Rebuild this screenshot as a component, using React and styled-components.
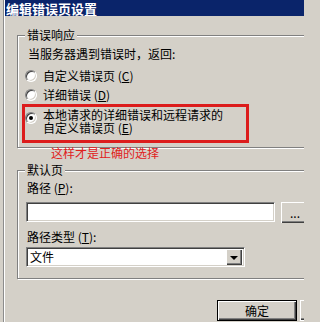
import React from 'react';
import styled, { createGlobalStyle } from 'styled-components';

const GlobalStyle = createGlobalStyle`
  * { box-sizing: border-box; }
  html, body {
    margin: 0;
    width: 304px;
    height: 322px;
    overflow: hidden;
    background: #d4d0c8;
  }
  body {
    font-family: "Noto Sans CJK SC", "Noto Sans", sans-serif;
    font-size: 12px;
    color: #000;
  }
`;

const Window = styled.div`
  width: 340px;
  height: 322px;
  padding-left: 5px;
  background: linear-gradient(
    to right,
    #d4d0c8 0 3px,
    #8c8c8c 3px 4px,
    #ffffff 4px 5px,
    #d4d0c8 5px
  );
`;

const TitleBar = styled.div`
  height: 16px;
  background: #0a246a;
  color: #fff;
  font-weight: bold;
  font-size: 13px;
  line-height: 17px;
  padding-left: 1px;
  white-space: nowrap;
`;

const Body = styled.div`
  padding: 13px 0 0 12px;
`;

const Group = styled.fieldset`
  margin: ${(p) => p.$mt || 0}px 0 0 0;
  padding: 0 0 ${(p) => p.$pb}px 0;
  width: 310px;
  min-inline-size: 0;
  border: 1px solid #808080;
  box-shadow: 1px 1px 0 #fff, inset 1px 1px 0 #fff;
`;

const Legend = styled.legend`
  margin-left: 7px;
  padding: 0 2px;
  line-height: 12px;
  background: #d4d0c8;
`;

const Text = styled.div`
  line-height: 12px;
  white-space: nowrap;
  margin: ${(p) => p.$mt}px 0 0 ${(p) => p.$ml}px;
`;

const Option = styled.label`
  display: flex;
  align-items: flex-start;
  gap: 6px;
  line-height: ${(p) => p.$lh || 12}px;
  margin: ${(p) => p.$mt || 0}px 0 0 ${(p) => p.$ml || 0}px;
`;

const Radio = styled.span`
  position: relative;
  flex: none;
  width: 12px;
  height: 12px;
  margin-top: ${(p) => p.$mt || 0}px;
  border-radius: 50%;
  background: #fff;
  border: 1px solid;
  border-color: #808080 #ffffff #ffffff #808080;
  box-shadow: inset 1px 1px 0 #404040, inset -1px -1px 0 #d4d0c8;

  &::after {
    content: '';
    display: ${(p) => (p.$checked ? 'block' : 'none')};
    position: absolute;
    left: 3px;
    top: 3px;
    width: 4px;
    height: 4px;
    border-radius: 50%;
    background: #000;
  }
`;

const Highlight = styled.div`
  margin: 3px 0 0 4px;
  width: 227px;
  border: 3px solid #dc1c1c;
  padding: 1px 0 6px 0;
`;

const Note = styled.div`
  margin: -1px 0 0 34px;
  color: #e0201c;
  line-height: 12px;
`;

const Row = styled.div`
  display: flex;
  gap: 6px;
  margin: ${(p) => p.$mt}px 0 0 8px;
`;

const sunken = `
  background: #fff;
  border: 1px solid;
  border-color: #808080 #ffffff #ffffff #808080;
  box-shadow: inset 1px 1px 0 #404040, inset -1px -1px 0 #d4d0c8;
`;

const TextBox = styled.div`
  ${sunken}
  width: 249px;
  height: 20px;
`;

const RaisedButton = styled.div`
  display: flex;
  align-items: center;
  justify-content: center;
  flex: none;
  width: ${(p) => p.$w}px;
  height: ${(p) => p.$h}px;
  background: #d4d0c8;
  line-height: 12px;
  box-shadow: inset 1px 1px 0 #fff, inset -1px -1px 0 #404040,
    inset -2px -2px 0 #808080;
`;

const Combo = styled.div`
  ${sunken}
  display: flex;
  align-items: center;
  justify-content: space-between;
  width: 219px;
  height: 20px;
  margin: 4px 0 0 8px;
  padding: 2px 2px 2px 3px;
  line-height: 12px;
`;

const Arrow = styled.span`
  width: 0;
  height: 0;
  border-left: 4px solid transparent;
  border-right: 4px solid transparent;
  border-top: 4px solid #000;
  margin-top: 1px;
`;

const ButtonRow = styled.div`
  display: flex;
  gap: 3px;
  margin-top: 21px;
  padding-left: 200px;
`;

const DialogButton = styled.div`
  display: flex;
  align-items: center;
  justify-content: center;
  flex: none;
  width: 80px;
  height: 21px;
  line-height: 12px;
  background: #d4d0c8;
  border: 1px solid ${(p) => (p.$default ? '#000' : '#fff')};
  box-shadow: ${(p) =>
    p.$default
      ? 'inset 1px 1px 0 #fff, inset -1px -1px 0 #404040, inset -2px -2px 0 #808080'
      : 'inset -1px -1px 0 #404040, inset -2px -2px 0 #808080'};
`;

const Key = styled.span`
  text-decoration: underline;
`;

export default function App() {
  return (
    <>
      <GlobalStyle />
      <Window>
        <TitleBar>编辑错误页设置</TitleBar>
        <Body>
          <Group $pb={4}>
            <Legend>错误响应</Legend>
            <Text $mt={7} $ml={10}>
              当服务器遇到错误时，返回:
            </Text>
            <Option $mt={10} $ml={7}>
              <Radio />
              <span>
                自定义错误页 (<Key>C</Key>)
              </span>
            </Option>
            <Option $mt={7} $ml={7}>
              <Radio />
              <span>
                详细错误 (<Key>D</Key>)
              </span>
            </Option>
            <Highlight>
              <Option $lh={13}>
                <Radio $checked $mt={4} />
                <span>
                  本地请求的详细错误和远程请求的
                  <br />
                  自定义错误页 (<Key>E</Key>)
                </span>
              </Option>
            </Highlight>
          </Group>
          <Note>这样才是正确的选择</Note>
          <Group $mt={5} $pb={11}>
            <Legend>默认页</Legend>
            <Text $mt={6} $ml={9}>
              路径 (<Key>P</Key>):
            </Text>
            <Row $mt={8}>
              <TextBox />
              <RaisedButton $w={28} $h={21}>...</RaisedButton>
            </Row>
            <Text $mt={8} $ml={9}>
              路径类型 (<Key>T</Key>):
            </Text>
            <Combo>
              <span>文件</span>
              <RaisedButton $w={16} $h={16}>
                <Arrow />
              </RaisedButton>
            </Combo>
          </Group>
          <ButtonRow>
            <DialogButton $default>确定</DialogButton>
            <DialogButton />
          </ButtonRow>
        </Body>
      </Window>
    </>
  );
}
